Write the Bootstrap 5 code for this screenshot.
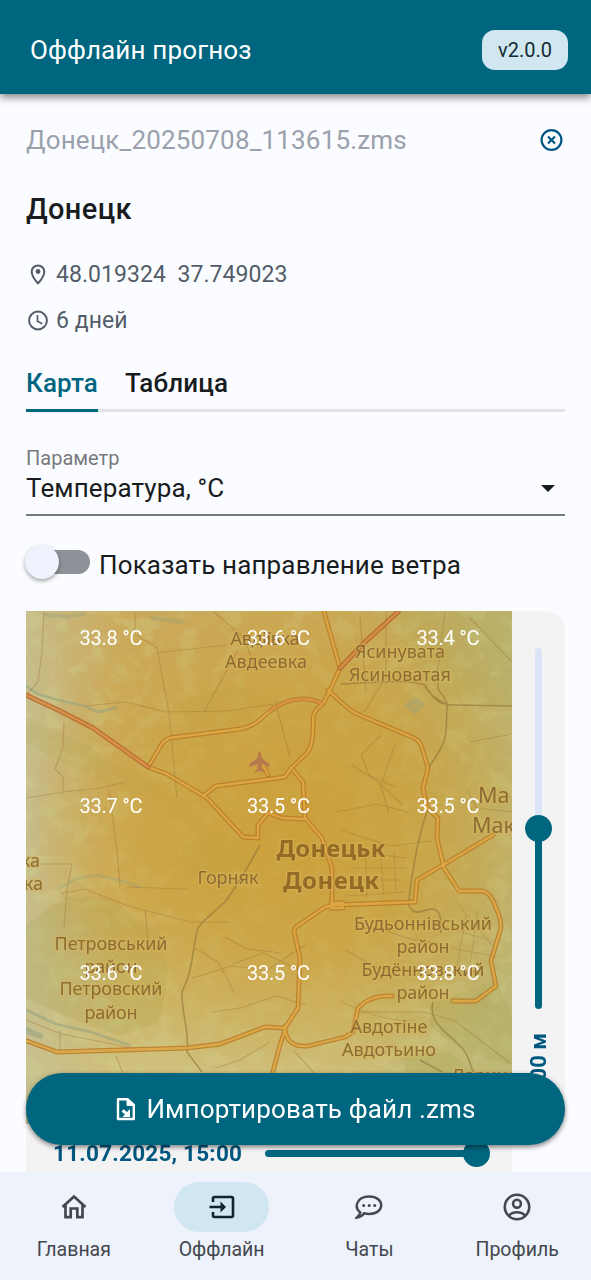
<!DOCTYPE html>
<html lang="ru">
<head>
<meta charset="utf-8">
<meta name="viewport" content="width=device-width, initial-scale=1">
<title>Оффлайн прогноз</title>
<link href="https://cdn.jsdelivr.net/npm/bootstrap@5.3.0/dist/css/bootstrap.min.css" rel="stylesheet">
<style>
  :root { --teal: #00667f; --ink: #191c1e; --muted: #535c69; --page: #fbfcff; --navbg: #edf2fb; --chip: #d0e6f0; }
  body { font-family: Roboto, "Noto Sans", sans-serif; background: var(--page); color: var(--ink); }
  .app-shell { height: 1280px; width: 591px; }
  .app-head { height: 94px; background: var(--teal); padding: 6px 23px 0 30px; box-shadow: 0 3px 8px rgba(0,0,0,.5); z-index: 3; }
  .head-title { font-size: 26px; letter-spacing: .15px; }
  .version { width: 86px; height: 40px; border-radius: 13px; background: var(--chip); color: #132a34; font-size: 20px; }
  .content { padding: 0 26px; }
  .file-line { height: 92px; font-size: 26px; letter-spacing: .16px; color: #9aa1ac; }
  .place { height: 44px; line-height: 46px; font-size: 29px; font-weight: 500; letter-spacing: .35px; margin-bottom: 21px; }
  .meta-line { height: 46px; font-size: 23px; color: var(--muted); }
  .meta-line span { padding-top: 2px; letter-spacing: .05px; }
  .tab-line { height: 69px; padding-top: 21px; gap: 27px; box-shadow: inset 0 -3px #e2e3e7; }
  .tab-line .nav-link { padding: 0; color: var(--ink); font-size: 26px; letter-spacing: .15px; font-weight: 500; line-height: 39px; border-bottom: 3px solid transparent; height: 48px; }
  .tab-line .nav-link.active { color: var(--teal); border-color: var(--teal); }
  .param { height: 69px; margin-top: 35px; border-bottom: 2px solid #74787d; }
  .param-label { font-size: 20px; line-height: 23px; color: #77797e; }
  .param-value { font-size: 26px; line-height: 36px; letter-spacing: .12px; }
  .caret { width: 0; height: 0; border: 7px solid transparent; border-top-color: var(--ink); border-bottom: 0; margin-right: 10px; }
  .switch-line { height: 34px; margin: 29px 0 32px; font-size: 26px; letter-spacing: .14px; }
  .switch-line > span { padding-top: 6px; }
  .toggle { width: 65px; height: 34px; padding: 5px 1px 5px 5px; }
  .toggle-track { background: #8e9197; border-radius: 13px; height: 24px; }
  .toggle-thumb { left: -1px; top: 0; width: 34px; height: 34px; background: #edf2fd; box-shadow: 0 2px 4px rgba(0,0,0,.35); }
  .panel { background: #f3f3f4; }
  .map-box { width: 486px; height: 513px; }
  .height-panel { width: 53px; height: 513px; border-radius: 0 20px 20px 0; padding-top: 37px; }
  .v-track { width: 7px; height: 361px; border-radius: 4px; background: linear-gradient(#dce5f8 50%, var(--teal) 50%); }
  .v-thumb { width: 27px; height: 27px; background: var(--teal); left: -10px; top: 167px; }
  .height-text { writing-mode: vertical-rl; transform: rotate(180deg); margin-top: 24px; font-size: 22px; line-height: 28px; font-weight: 700; color: #00577f; }
  .time-panel { width: 486px; height: 60px; padding: 0 23px 2px 27px; }
  .time-text { font-size: 22.5px; font-weight: 700; color: #00577f; width: 212px; line-height: 58px; letter-spacing: .22px; }
  .h-track { height: 7px; border-radius: 4px; background: var(--teal); }
  .h-thumb { width: 27px; height: 27px; right: -1px; top: -10px; background: var(--teal); }
  .import-btn, .import-btn:hover { left: 26px; width: 539px; top: 1073px; height: 72px; background: var(--teal); color: #fff; font-size: 26px; letter-spacing: .16px; border: 0; box-shadow: 0 2px 5px rgba(0,0,0,.5); z-index: 2; }
  .import-btn svg { margin-right: 9px; }
  .bottom-bar { height: 108px; background: var(--navbg); z-index: 1; padding-top: 10px; }
  .bottom-bar a { width: 25%; color: #44474e; font-size: 19.5px; text-decoration: none; line-height: 28px; }
  .pill { width: 95px; height: 50px; margin-bottom: 4px; }
  .pill.on { background: var(--chip); color: #12232d; }
  svg { display: block; flex: none; }
  .map-name { font-family: "Noto Sans", sans-serif; font-size: 18px; fill: #84622f; text-anchor: middle; paint-order: stroke; stroke: #d8b65c; stroke-opacity: .45; stroke-width: 3px; }
  .map-name text { fill-opacity: .88; }
  .map-temp { font-family: Roboto, sans-serif; font-size: 20px; fill: #fff; text-anchor: middle; }
</style>
</head>
<body>
<div class="app-shell position-relative d-flex flex-column overflow-hidden">
  <header class="app-head d-flex align-items-center justify-content-between text-white flex-shrink-0 position-relative">
    <span class="head-title">Оффлайн прогноз</span>
    <span class="version d-flex align-items-center justify-content-center">v2.0.0</span>
  </header>

  <main class="content flex-grow-1 overflow-hidden">
    <div class="file-line d-flex align-items-center justify-content-between">
      <span>Донецк_20250708_113615.zms</span>
      <svg width="27" height="26" viewBox="0 0 27 26" fill="none" stroke="#00577f" stroke-width="2.200"><circle cx="13.500" cy="13" r="9.900"/><path d="M10 9.500l7 7m0-7l-7 7"/></svg>
    </div>
    <div class="place">Донецк</div>
    <div class="meta-line d-flex align-items-center">
      <svg width="30" height="24" viewBox="0 0 30 24" fill="none" stroke="#535c69" stroke-width="2"><path d="M12 21.300C8 17 5.700 13.200 5.700 9.700a6.300 6.300 0 0 1 12.600 0C18.300 13.200 16 17 12 21.300z"/><circle cx="12" cy="9.500" r="2.400" fill="#535c69" stroke="none"/></svg>
      <span>48.019324&nbsp; 37.749023</span>
    </div>
    <div class="meta-line d-flex align-items-center">
      <svg width="30" height="24" viewBox="0 0 30 24" fill="none" stroke="#535c69" stroke-width="2"><circle cx="12" cy="12.500" r="8.900"/><path d="M11.500 7v6.200l4.800 2.600" stroke-width="1.700"/></svg>
      <span>6 дней</span>
    </div>
    <nav class="tab-line nav d-flex">
      <a class="nav-link active" href="#">Карта</a>
      <a class="nav-link" href="#">Таблица</a>
    </nav>
    <div class="param">
      <div class="param-label">Параметр</div>
      <div class="param-value d-flex align-items-center justify-content-between"><span>Температура, °C</span><span class="caret"></span></div>
    </div>
    <div class="switch-line d-flex align-items-center">
      <div class="toggle position-relative me-2"><div class="toggle-track"></div><div class="toggle-thumb position-absolute rounded-circle"></div></div>
      <span>Показать направление ветра</span>
    </div>

    <div class="d-flex">
      <div class="map-box">
        <svg width="486" height="513" viewBox="26 611 486 513">
          <defs>
            <linearGradient id="land" x1="0" y1="0" x2="0" y2="1"><stop offset="0" stop-color="#cbaa5c"/><stop offset=".55" stop-color="#cfac56"/><stop offset=".82" stop-color="#cebb73"/><stop offset="1" stop-color="#d3c78b"/></linearGradient>
            <radialGradient id="heat" gradientUnits="userSpaceOnUse" cx="295" cy="825" r="265"><stop offset="0" stop-color="#cb9d35" stop-opacity=".85"/><stop offset=".5" stop-color="#cba03b" stop-opacity=".62"/><stop offset="1" stop-color="#cba343" stop-opacity="0"/></radialGradient>
            <linearGradient id="west"><stop offset="0" stop-color="#c6bf92" stop-opacity=".9"/><stop offset=".2" stop-color="#c8b882" stop-opacity="0"/></linearGradient>
            <linearGradient id="east"><stop offset=".62" stop-color="#b6ac5b" stop-opacity="0"/><stop offset="1" stop-color="#b9b577" stop-opacity=".8"/></linearGradient>
            <filter id="woods" x="0" y="0" width="1" height="1"><feTurbulence type="fractalNoise" baseFrequency=".045 .055" numOctaves="4" seed="12"/><feColorMatrix values="0 0 0 0 .64  0 0 0 0 .66  0 0 0 0 .29  0 5 0 0 -2.5"/></filter>
            <filter id="blocks" x="0" y="0" width="1" height="1"><feTurbulence type="fractalNoise" baseFrequency=".14" numOctaves="3" seed="4"/><feColorMatrix values="0 0 0 0 .56  0 0 0 0 .56  0 0 0 0 .24  0 3 0 0 -1.6"/></filter>
          </defs>
          <rect x="26" y="611" width="486" height="513" fill="url(#land)"/>
          <rect x="26" y="611" width="486" height="513" fill="url(#west)"/>
          <rect x="26" y="611" width="486" height="513" fill="url(#east)"/>
          <rect x="26" y="611" width="486" height="513" filter="url(#woods)" opacity=".32"/>
          <rect x="26" y="611" width="486" height="513" filter="url(#blocks)" opacity=".24"/>
          <g fill="#a0a04a" opacity=".2">
            <path d="M26 925l40-28 44 0 30 24 18 6 10 45-8 50-40 14-50-18-44-20zM180 850l28-20 35 7 10 20-32 25-36-8zM430 1005l65-25 17 35v50l-40-10-42-28zM400 1058l50-6 30 25v47h-50z"/>
            <path d="M180 702l60-20 28 14-20 26-60 8zM400 612l112 0 0 95-50-6-40-28-20-25zM26 717l60 28 60 37 50 10-20 15-64-20-86-44z" opacity=".65"/>
          </g>
          <rect x="26" y="611" width="486" height="513" fill="url(#heat)"/>
          <!-- water -->
          <g fill="none" stroke="#8ea082" stroke-opacity=".5" stroke-width="2.600" stroke-linecap="round" stroke-linejoin="round">
            <path d="M26 686l12 8 20 6 26 6 14 6 18-4"/><path d="M60 888l15-9 22-4 25 6 18 6" stroke-opacity=".35"/>
            <path d="M26 1010l30 14 35 8 38 13"/><path d="M46 615l22 2 16-3M152 618l30 4" stroke-width="4" stroke-opacity=".35"/>
            <path d="M26 1030l14 6" stroke-width="6"/><path d="M408 705l8-5 5 4-6 7z" stroke-width="6" stroke-opacity=".35"/>
          </g>
          <!-- lanes, boundaries and railways -->
          <g fill="none" stroke="#956d35" stroke-opacity=".34" stroke-width="1.200" stroke-linejoin="round">
            <path d="M44 612l-2 40-4 30-12 14M135 612l0 22 22 14 12 65 8 85M84 706l42-4 40 10 60-1 48-7M156 653l70-8M64 722l-1 25-8 22 8 8 0 14M26 798l38-6 36-4 26-6M109 790l8 60 3 36M26 864l46 0-5 24-3 40M60 894l25-5 40 16 65 17 40 0M126 887l60 2M145 910l3 30M26 1020l36 14 70 14M60 1030v20M116 1056l8 20"/>
            <path d="M214 612l30 26 12 34M238 650l-34 62M275 700l15 58M360 617l6 75M386 612v65l-22 35M445 612l-6 50-5 22M470 618l42 44M470 742l42-8M381 735l-20 20 8 20 26 12M395 745l-14 40 22 20M467 790l10 18 35 4M352 765l28 18 9 30M336 812l42-8 32 9M340 830l50 16 42-5M343 850l64 8M355 930l20-3 35 12 30 5M345 950l32 18 55 5M305 945l-38 25-35-4-40 12M300 970l-37-17-30 11M306 1005l-30-9-35 12-30 4"/>
            <path d="M215 1068l25-8 30-18M355 1012l70 0 30 9 55 42M295 1052l20 22M225 937l22 12 34 4M195 948l24 15 16 31"/>
            <path d="M340 1001c20 10 50 22 75 19M455 930l34 10M451 948l42 8M440 970l42 2M466 915l-9 52M478 910l-8 53M455 900l37 45M350 868l58 0M350 880l50 0M365 850l2 48M380 848l4 48M394 850l2 42M345 896l60-4" stroke-width=".9"/>
          </g>
          <g fill="none" stroke="#8f7638" stroke-opacity=".62" stroke-width="1.600">
            <path d="M340 684c50-3 73-4 85 1 10 17 16 20 29 20l58 1M438 680c-2 16 9 13 9 27-1 26 0 30-7 43l-12 19M425 686c7 12 12 12 22 19"/>
            <path d="M260 845c-12 22-24 42-35 57-13 12-21 17-27 26-6 20-4 40-16 64-1 20 8 40 5 60l15 20M433 1002c-5 20 13 30 24 41 14 12 12 23 17 29M420 1060l22 12M427 812c-10 26-18 80-18 93 5 14 15 3 24 4 11 3 6 15 8 24"/>
          </g>
          <!-- highways: dark casing below a light core -->
          <g fill="none" stroke-linejoin="round" stroke-linecap="round" opacity=".85">
            <g stroke="#b97b29" stroke-width="4.800">
              <path id="hw1" d="M148 767L167 774 207 798 243 837 258 838 258 825 268 813 282 818 305 819M148 767l15-25q6-5 14-5l63-8q10-2 17-7l13-11q16-12 32-12 12 0 21 5"/>
              <path id="hw2" d="M324 612l16 56-10 22-7 14q-10 6-10 16 1 25-6 33l-16 15-6 9-22 3-47 6-13 10M263 765l5 10M340 668l25-26 33-30M328 690q20 19 27 23l33 14 24 10q8 3 10 11l6 20-5 20 4 20 11 10-1 20 7 30 15 23 24 0q9 3 13 17 5 10 5 20l-10 33 5 25-20 15-23 0M293 770l10 12 2 36 17 20 10 30 0 37"/>
              <path id="hw3" d="M493 835l-50 30-26 15-2 22-80 3-10 2-29 20q-3 3-1 9l5 22-2 50-13 20-20-1-45 17-33 4-130 4-30-11M285 1026q0 22 23 20l37-9 8-5 5-24 7-6q12-7 27-6M285 1030l-5 15-8 30M331 903h12v5h-12z"/>
            </g>
            <g stroke="#dea642" stroke-width="2.300"><use href="#hw1"/><use href="#hw2"/><use href="#hw3"/></g>
            <path d="M26 695L60 711 93 728 148 767M340 668l25-26 33-30" stroke="#b5662c" stroke-width="5"/>
            <path d="M26 695L60 711 93 728 148 767M340 668l25-26 33-30M270 711q16-12 32-12 12 0 21 5" stroke="#d98d45" stroke-width="2.300"/>
          </g>
          <path d="M259.500 752q2 0 2 6l8 6v3l-8-3v5l4 4-6-2-6 2 4-4v-5l-8 3v-3l8-6q0-6 2-6z" fill="#b57a4c"/>
          <g class="map-name" transform="translate(0 .5)">
            <text x="265" y="644" textLength="69">Авдіївка</text><text x="266" y="667" textLength="82">Авдеевка</text>
            <text x="400" y="657" textLength="90">Ясинувата</text><text x="400" y="680" textLength="102">Ясиноватая</text>
            <text x="228" y="883" textLength="61">Горняк</text>
            <text x="111" y="949" textLength="113">Петровський</text><text x="111" y="972" textLength="53">район</text><text x="111" y="994" textLength="103">Петровский</text><text x="111" y="1018" textLength="53">район</text>
            <text x="423" y="929" textLength="138">Будьоннівський</text><text x="423" y="952" textLength="53">район</text><text x="423" y="975" textLength="123">Будённовский</text><text x="423" y="998" textLength="53">район</text>
            <text x="389" y="1032" textLength="77">Авдотіне</text><text x="389" y="1055" textLength="94">Авдотьино</text>
            <text x="452" y="1081" style="text-anchor:start">Ларине</text>
            <g style="font-size:21.500px;text-anchor:start"><text x="478" y="802">Ма</text><text x="472" y="832">Мак</text></g>
            <g style="text-anchor:end"><text x="40" y="866">ка</text><text x="43" y="889">ка</text></g>
            <g style="font-size:24px;font-weight:700;fill:#8b6222"><text x="331" y="856" textLength="109">Донецьк</text><text x="331" y="888" textLength="96">Донецк</text></g>
          </g>
          <g class="map-temp" transform="translate(0 .6)">
            <text x="111" y="644" textLength="63">33.8 °C</text><text x="278.500" y="644" textLength="63">33.6 °C</text><text x="448" y="644" textLength="63">33.4 °C</text>
            <text x="111" y="812" textLength="63">33.7 °C</text><text x="278.500" y="812" textLength="63">33.5 °C</text><text x="448" y="812" textLength="63">33.5 °C</text>
            <text x="111" y="979" textLength="63">33.6 °C</text><text x="278.500" y="979" textLength="63">33.5 °C</text><text x="448" y="979" textLength="63">33.8 °C</text>
          </g>
        </svg>
      </div>
      <div class="height-panel panel d-flex flex-column align-items-center">
        <div class="v-track position-relative flex-shrink-0"><div class="v-thumb position-absolute rounded-circle"></div></div>
        <div class="height-text">00 м</div>
      </div>
    </div>
    <div class="time-panel panel d-flex align-items-center">
      <span class="time-text">11.07.2025, 15:00</span>
      <div class="h-track position-relative flex-grow-1"><div class="h-thumb position-absolute rounded-circle"></div></div>
    </div>
  </main>

  <button class="import-btn btn rounded-pill position-absolute d-flex align-items-center justify-content-center">
    <svg width="22" height="26" viewBox="0 0 22 26" fill="none" stroke="#fff" stroke-width="2.400" stroke-linejoin="round"><path d="M3 3.200h9.500L18.800 9v14H3z"/><path d="M12 3v6.500h7" fill="#fff" stroke-width="1"/><path d="M15 13v8H7.500l2.400-2.600L6.500 15.500l2.200-2.200 3.300 2.700z" fill="#fff" stroke="none"/></svg>
    <span>Импортировать файл .zms</span>
  </button>

  <nav class="bottom-bar d-flex flex-shrink-0 position-relative">
    <a href="#" class="d-flex flex-column align-items-center"><span class="pill rounded-pill d-flex align-items-center justify-content-center"><svg width="28" height="28" viewBox="0 0 28 28" fill="none" stroke="currentColor" stroke-width="2.700"><path d="M2.500 14L14 3.500 25.500 14M5.500 12v12.200h5.200v-8.700h6.600v8.700h5.200V12"/></svg></span>Главная</a>
    <a href="#" class="d-flex flex-column align-items-center"><span class="pill on rounded-pill d-flex align-items-center justify-content-center"><svg width="28" height="28" viewBox="0 0 28 28" fill="none" stroke="currentColor" stroke-width="2.600"><path d="M5 9V5.500Q5 4 6.500 4h17Q25 4 25 5.500v17q0 1.500-1.500 1.500h-17Q5 24 5 22.500V19M1.500 14H16"/><path d="M12.500 8.500l5.500 5.500-5.500 5.500z" fill="currentColor" stroke="none"/></svg></span>Оффлайн</a>
    <a href="#" class="d-flex flex-column align-items-center"><span class="pill rounded-pill d-flex align-items-center justify-content-center"><svg width="28" height="28" viewBox="0 0 28 28" fill="none" stroke="currentColor" stroke-width="2.400"><path d="M5.300 19.500C-1.500 14.500 1.800 3.500 14.200 3.500c16 0 16 17.500 0 17.500-2 0-3.600-.3-5-.8-1.700 2.300-4 4-7.200 4.300 1.800-1.500 2.900-3 3.300-5z"/><g fill="currentColor" stroke="none"><circle cx="8.700" cy="12.500" r="1.500"/><circle cx="14.200" cy="12.500" r="1.500"/><circle cx="19.700" cy="12.500" r="1.500"/></g></svg></span>Чаты</a>
    <a href="#" class="d-flex flex-column align-items-center"><span class="pill rounded-pill d-flex align-items-center justify-content-center"><svg width="28" height="28" viewBox="0 0 28 28" fill="none" stroke="currentColor" stroke-width="2.600"><circle cx="14" cy="14" r="12.200"/><circle cx="14" cy="10.700" r="3.900"/><path d="M5.800 22.800c3.500-4.800 12.900-4.800 16.400 0"/></svg></span>Профиль</a>
  </nav>
</div>
<script src="https://cdn.jsdelivr.net/npm/bootstrap@5.3.0/dist/js/bootstrap.bundle.min.js"></script>
</body>
</html>
